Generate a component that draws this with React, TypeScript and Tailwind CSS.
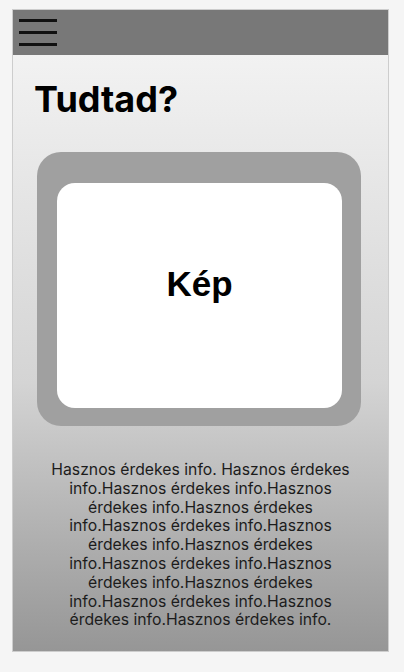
export default function App() {
  return (
    <div className="min-h-[672px] w-[404px] bg-[#f5f5f5] pt-[9px]">
      <div className="ml-[12px] flex h-[643px] w-[377px] flex-col border border-[#cdcdcd]">
        <div className="flex h-[45px] shrink-0 flex-col gap-[9px] bg-[#787878] pl-[6px] pt-[9px]">
          <div className="h-[3px] w-[38px] bg-[#111111]" />
          <div className="h-[3px] w-[38px] bg-[#111111]" />
          <div className="h-[3px] w-[38px] bg-[#111111]" />
        </div>
        <div className="flex flex-1 flex-col bg-gradient-to-b from-[#f2f2f2] via-[#d4d4d4] via-55% to-[#969696]">
          <h1 className="ml-[21px] mt-[22px] font-['Inter',sans-serif] text-[36px] font-bold leading-[44px] text-black">
            Tudtad?
          </h1>
          <div className="ml-[24px] mt-[31px] h-[274px] w-[324px] rounded-[24px] bg-[#a0a0a0] pl-[20px] pt-[31px]">
            <div className="flex h-[225px] w-[285px] items-center justify-center rounded-[18px] bg-white pb-[24px]">
              <span className="font-['Liberation_Sans',Arial,sans-serif] text-[35px] font-bold leading-none text-black">
                Kép
              </span>
            </div>
          </div>
          <p className="mx-auto mt-[35px] w-[312px] text-center font-['Inter',sans-serif] text-[15.75px] leading-[18.8px] text-[#1c1c1c]">
            Hasznos érdekes info. Hasznos érdekes info.Hasznos érdekes info.Hasznos érdekes info.Hasznos érdekes info.Hasznos érdekes info.Hasznos érdekes info.Hasznos érdekes info.Hasznos érdekes info.Hasznos érdekes info.Hasznos érdekes info.Hasznos érdekes info.Hasznos érdekes info.Hasznos érdekes info.
          </p>
        </div>
      </div>
    </div>
  );
}
